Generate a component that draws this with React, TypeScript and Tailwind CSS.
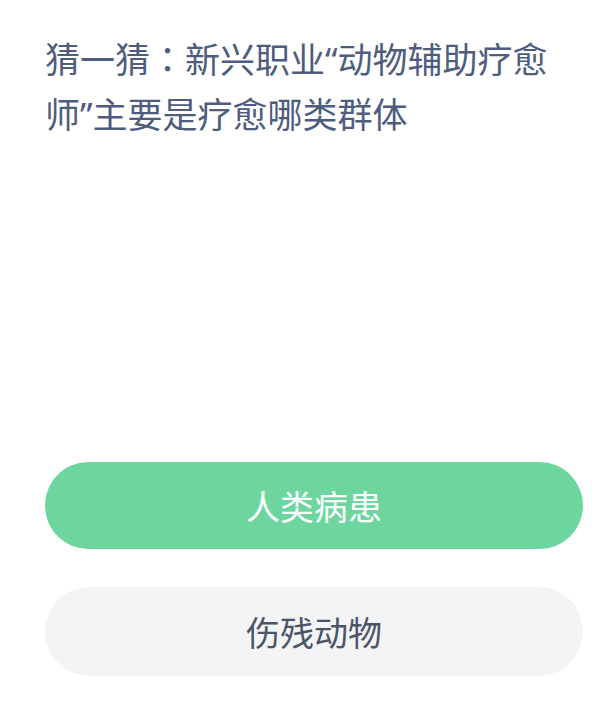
import React from "react";

export default function App() {
  return (
    <div className="w-[601px] h-[720px] bg-white overflow-hidden flex flex-col font-['Noto_Sans','Noto_Sans_CJK_SC',sans-serif]">
      <div className="pt-[30px] pl-[45px] pr-[18px]">
        <h1 className="text-[35px] leading-[55px] font-normal text-[#4e5c7d] whitespace-nowrap">
          猜一猜
          <span className="font-['Noto_Sans_CJK_TC',sans-serif]">：</span>
          新兴职业“动物辅助疗愈
          <br />
          师”主要是疗愈哪类群体
        </h1>
      </div>
      <div className="flex flex-col gap-[38px] pl-[45px] pr-[18px] mt-[320px] font-['Noto_Sans_CJK_SC',sans-serif]">
        <button className="h-[87px] rounded-full bg-[#6dd69f] text-white text-[34px] flex items-center justify-center">
          人类病患
        </button>
        <button className="h-[89px] rounded-full bg-[#f3f4f6] text-[#4b5567] text-[34px] flex items-center justify-center">
          伤残动物
        </button>
      </div>
    </div>
  );
}
